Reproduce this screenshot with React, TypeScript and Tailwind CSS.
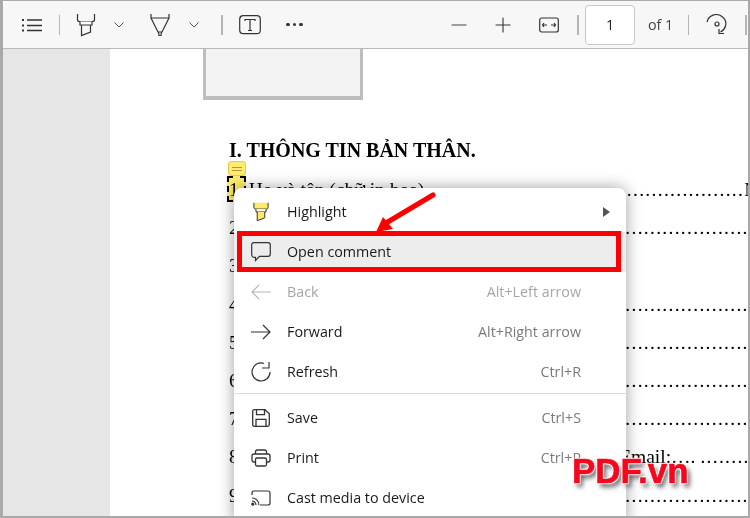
import { Minus, Plus } from 'lucide-react'

const uiFont = "font-['Open_Sans','Noto_Sans',sans-serif]"

function HighlighterIcon({ fill = 'none', size = 24 }: { fill?: string; size?: number }) {
  return (
    <svg width={size} height={size} viewBox="0 0 24 24" fill="none" stroke="#333" strokeWidth="1.2">
      <path d="M3.500 1v5.500q0 2 2 2h13q2 0 2-2V1" fill={fill} />
      <path d="M6 8.500V12h12V8.500" fill="#fff" />
      <path d="M7.500 12v10.500L16.500 19v-7" fill={fill} />
    </svg>
  )
}

function PenIcon() {
  return (
    <svg width="24" height="24" viewBox="0 0 24 24" fill="none" stroke="#333" strokeWidth="1.2">
      <path d="M3 1v4h18V1" />
      <path d="M3 5l7 14h4l7-14" />
      <path d="M10.500 19l.5 3.500h2l.5-3.500" />
    </svg>
  )
}

function Chevron() {
  return (
    <svg width="10" height="6" viewBox="0 0 10 6" fill="none" stroke="#555" strokeWidth="1">
      <path d="M.5.500L5 5l4.500-4.500" />
    </svg>
  )
}

function Sep({ thick }: { thick?: boolean }) {
  return <div className={thick ? 'h-[20px] w-[2px] bg-[#b4b4b4]' : 'h-[20px] w-px bg-[#b4b4b4]'} />
}

function Toolbar() {
  return (
    <div className="flex h-[48px] shrink-0 items-center rounded-tl-[6px] border-b border-[#b9b9b9] bg-[#f7f7f7]">
      <svg className="ml-[18px]" width="22" height="14" viewBox="0 0 22 14" fill="none" stroke="#333" strokeWidth="1.300">
        <path d="M6 2h15M6 7.500h15M6 12.500h15" />
        <path d="M1 2h2M1 7.500h2M1 12.500h2" strokeWidth="2" />
      </svg>
      <div className="ml-[16px]"><Sep /></div>
      <div className="ml-[14px]"><HighlighterIcon /></div>
      <div className="ml-[16px]"><Chevron /></div>
      <div className="ml-[24px]"><PenIcon /></div>
      <div className="ml-[17px]"><Chevron /></div>
      <div className="ml-[22px]"><Sep thick /></div>
      <svg className="ml-[16px]" width="22" height="20" viewBox="0 0 22 20" fill="none" stroke="#333" strokeWidth="1.200">
        <rect x=".7" y=".7" width="20.600" height="18" rx="3.500" />
        <path d="M6 6V4.500h10V6M11 4.500v11M9 15.500h4" />
      </svg>
      <div className="ml-[25px] flex gap-[3px]">
        <span className="size-[3.500px] rounded-full bg-[#333]" />
        <span className="size-[3.500px] rounded-full bg-[#333]" />
        <span className="size-[3.500px] rounded-full bg-[#333]" />
      </div>
      <Minus className="ml-[144.500px]" size={24} strokeWidth={1.1} color="#444" />
      <Plus className="ml-[20px]" size={24} strokeWidth={1.1} color="#333" />
      <svg className="ml-[24px]" width="20" height="16" viewBox="0 0 20 16" fill="none" stroke="#333" strokeWidth="1.200">
        <rect x=".7" y="1" width="18.600" height="14" rx="2" />
        <path d="M3.500 8h4.500M5 6L3.500 8 5 10M16.500 8H12M15 6l1.500 2-1.500 2" />
      </svg>
      <div className="ml-[18px]"><Sep thick /></div>
      <div className={`${uiFont} ml-[6px] flex h-[40px] w-[50px] shrink-0 items-center justify-center rounded-[4px] border border-[#c8c8c8] bg-white text-[14.300px] text-[#222]`}>1</div>
      <span className={`${uiFont} ml-[13px] w-[24px] text-[14.300px] whitespace-nowrap text-[#444]`}>of 1</span>
      <div className="ml-[16px]"><Sep /></div>
      <svg className="ml-[17px]" width="22" height="22" viewBox="0 0 22 22" fill="none" stroke="#333" strokeWidth="1.200">
        <path d="M1 8a9.500 9.500 0 0 1 15-5.500c3 2.300 4.500 6 3.500 9.500-.6 2.300-2.200 4.500-5 6" />
        <path d="M13 15v4.500h5" />
        <circle cx="11" cy="10" r="2" />
      </svg>
      <div className="ml-[17px]"><Sep thick /></div>
    </div>
  )
}

function Dots({ n }: { n: number }) {
  return <span className="tracking-[1.300px]">{'.'.repeat(n)}</span>
}

const rows = [
  { n: '1.', body: <>Họ và tên (chữ in hoa) <Dots n={51} />M</> },
  { n: '2.', body: <Dots n={84} /> },
  { n: '3.', body: null },
  { n: '4.', body: <Dots n={84} /> },
  { n: '5.', body: <Dots n={84} /> },
  { n: '6.', body: <Dots n={84} /> },
  { n: '7.', body: <Dots n={84} /> },
  { n: '8.', body: <><Dots n={60} />Email:…. <Dots n={14} /></> },
  { n: '9.', body: <Dots n={84} /> },
]

function PdfPage() {
  return (
    <div className="flex-1 overflow-hidden bg-white font-['Liberation_Serif',serif] text-black">
      <div className="ml-[93px] h-[51px] w-[160px] border-x-[3px] border-b-[4px] border-[#bdbdbd] bg-[#f3f3f3]" />
      <div className="mt-[37px] ml-[119px] text-[20px] leading-[26px] font-bold whitespace-nowrap">
        I. THÔNG TIN BẢN THÂN.
      </div>
      <div className="mt-[8px] ml-[119px]">
        {rows.map((r) => (
          <div key={r.n} className="flex h-[38.200px] items-center gap-[5px] overflow-hidden text-[19.500px] leading-[38px] whitespace-nowrap">
            <span className="shrink-0">{r.n}</span>
            <span>{r.body}</span>
          </div>
        ))}
      </div>
    </div>
  )
}

function Item({
  icon,
  label,
  shortcut,
  disabled,
  arrow,
}: {
  icon: React.ReactNode
  label: string
  shortcut?: string
  disabled?: boolean
  arrow?: boolean
}) {
  return (
    <div className="flex h-[40px] items-center pr-[45px] pl-[17px] text-[14.300px]">
      <div className="flex w-[36px] shrink-0 items-center">{icon}</div>
      <span className={disabled ? 'text-[#a6a6a6]' : 'text-[#1a1a1a]'}>{label}</span>
      {shortcut && (
        <span className={disabled ? 'ml-auto text-[#a6a6a6]' : 'ml-auto text-[#7a7a7a]'}>{shortcut}</span>
      )}
      {arrow && <span className="mr-[-29px] ml-auto h-0 w-0 border-y-[5px] border-l-[7px] border-y-transparent border-l-[#555]" />}
    </div>
  )
}

function ContextMenu() {
  return (
    <div className={`${uiFont} absolute top-[188px] left-[234px] h-[340px] w-[392px] rounded-[8px] bg-white pt-[4px] shadow-[0_0_16px_rgba(0,0,0,0.38)]`}>
      <Item icon={<HighlighterIcon fill="#ffe96b" size={20} />} label="Highlight" arrow />
      <div className="bg-[#ededed]">
        <Item
          label="Open comment"
          icon={
            <svg width="20" height="20" viewBox="0 0 20 20" fill="none" stroke="#333" strokeWidth="1.200">
              <path d="M3 .7h14q2.300 0 2.300 2.300v9q0 2.300-2.300 2.300H8.500L4.500 18.500v-3.200H3Q.7 15.300.7 12V3Q.7.700 3 .7z" />
            </svg>
          }
        />
      </div>
      <Item
        disabled
        label="Back"
        shortcut="Alt+Left arrow"
        icon={
          <svg width="20" height="16" viewBox="0 0 20 16" fill="none" stroke="#b5b5b5" strokeWidth="1.200">
            <path d="M20 8H1M8 1L1 8l7 7" />
          </svg>
        }
      />
      <Item
        label="Forward"
        shortcut="Alt+Right arrow"
        icon={
          <svg width="20" height="16" viewBox="0 0 20 16" fill="none" stroke="#333" strokeWidth="1.200">
            <path d="M0 8h19M12 1l7 7-7 7" />
          </svg>
        }
      />
      <Item
        label="Refresh"
        shortcut="Ctrl+R"
        icon={
          <svg width="20" height="20" viewBox="0 0 20 20" fill="none" stroke="#333" strokeWidth="1.200">
            <path d="M13 1.500A9 9 0 1 0 19 10" />
            <path d="M11 6h7V0" />
          </svg>
        }
      />
      <div className="mt-[1px] mb-[4px] h-px bg-[#dcdcdc]" />
      <Item
        label="Save"
        shortcut="Ctrl+S"
        icon={
          <svg className="ml-[1px]" width="18" height="18" viewBox="0 0 18 18" fill="none" stroke="#333" strokeWidth="1.300">
            <path d="M2.500.7H13l4.300 4v10.800q0 1.800-1.800 1.800h-13Q.7 17.300.7 15.500v-13Q.7.700 2.500.700z" />
            <path d="M4.500.7v5h8v-5M4 17.300v-7h10v7" />
          </svg>
        }
      />
      <Item
        label="Print"
        shortcut="Ctrl+P"
        icon={
          <svg width="20" height="18" viewBox="0 0 20 18" fill="none" stroke="#333" strokeWidth="1.300">
            <path d="M4.500 5V3q0-2 2-2h7q2 0 2 2v2" />
            <path d="M4.500 13H3q-2 0-2-2V7q0-2 2-2h14q2 0 2 2v4q0 2-2 2h-1.500" />
            <rect x="4.500" y="9" width="11" height="8" rx="1.500" />
          </svg>
        }
      />
      <Item
        label="Cast media to device"
        icon={
          <svg width="20" height="16" viewBox="0 0 20 16" fill="none" stroke="#333" strokeWidth="1.200">
            <path d="M1 5V3q0-2 2-2h14q2 0 2 2v10q0 2-2 2H9" />
            <path d="M1 8a7 7 0 0 1 7 7M1 11a4 4 0 0 1 4 4" />
            <circle cx="1.800" cy="14.200" r="1" fill="#333" />
          </svg>
        }
      />
    </div>
  )
}

function Annotation() {
  return (
    <>
      <div className="absolute top-[161px] left-[228px] flex h-[15px] w-[18px] flex-col justify-center gap-[2px] rounded-[3px] border border-[#e0cc4a] bg-[#ffec6e] px-[3px]">
        <div className="h-px bg-[#a99c3c]" />
        <div className="h-px bg-[#a99c3c]" />
      </div>
      <div className="absolute top-[176px] left-[227px] h-[26px] w-[19px] border-2 border-dashed border-black bg-[#ffec6e] mix-blend-multiply" />
    </>
  )
}

export default function App() {
  return (
    <div className="relative h-[518px] w-[750px] overflow-hidden bg-white">
      <div className="flex h-[518px] flex-col border-t border-r-2 border-l-[3px] border-[#a9a9a9]">
        <Toolbar />
        <div className="flex min-h-0 flex-1">
          <div className="w-[107px] shrink-0 bg-[#e6e6e6]" />
          <PdfPage />
        </div>
      </div>
      <Annotation />
      <ContextMenu />
      <div className="absolute top-[231px] left-[237px] h-[41px] w-[384px] border-[5px] border-[#ff0000]" />
      <svg className="absolute top-[190px] left-[360px]" width="80" height="50" viewBox="0 0 80 50">
        <path d="M73 5L26 33" stroke="#f00" strokeWidth="5" strokeLinecap="round" />
        <path d="M16 42l7-15 10 12z" fill="#f00" />
      </svg>
      <div className="absolute top-[449px] left-[572px] font-['Liberation_Sans',sans-serif] text-[35px] leading-[44px] font-bold text-[#f5081f] [-webkit-text-stroke:0.6px_#f5081f] [text-shadow:0_0_2px_#fff,1px_1px_1px_#fff,-1px_-1px_1px_#fff,1px_-1px_1px_#fff,-1px_1px_1px_#fff,3px_4px_5px_#555]">
        PDF.vn
      </div>
      <div className="absolute inset-x-0 bottom-0 h-[2px] bg-[#a9a9a9]" />
    </div>
  )
}
